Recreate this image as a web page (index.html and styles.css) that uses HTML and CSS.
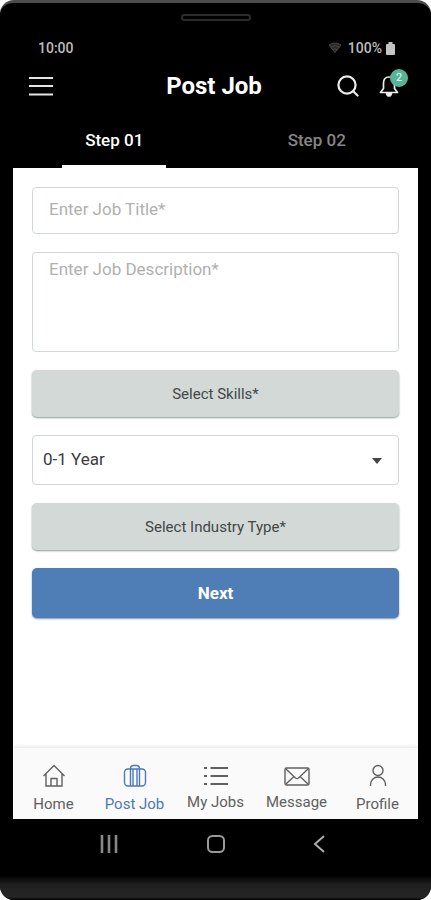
FILE: index.html
```html
<!DOCTYPE html>
<html lang="en">
<head>
<meta charset="utf-8">
<meta name="viewport" content="width=device-width, initial-scale=1">
<title>Post Job</title>
<link rel="stylesheet" href="styles.css">
</head>
<body>
<div class="phone">
  <div class="speaker"></div>
  <div class="status">
    <span>10:00</span>
    <span class="status-right">
      <svg class="wifi" width="14" height="12" viewBox="0 0 14 12" fill="none" stroke="#484848"><path d="M1 3Q7-1 13 3L7 10.500Z" fill="#292929"/><path d="M3 5q4-2.500 8 0M5 7.500q2-1.500 4 0"/></svg>
      <span>100%</span>
      <svg width="9" height="13" viewBox="0 0 9 13" fill="#c4c4c4"><path d="M2.500 0h4v2H8q1 0 1 1v9q0 1-1 1H1q-1 0-1-1V3q0-1 1-1h1.500z"/></svg>
    </span>
  </div>
  <header class="header">
    <button class="icon-button" aria-label="Menu">
      <svg width="24" height="20" viewBox="0 0 24 20" stroke="#e4e4e4" stroke-width="2.200"><path d="M0 2h24M0 10h24M0 18.500h24"/></svg>
    </button>
    <h1>Post Job</h1>
    <div class="actions">
      <button class="icon-button" aria-label="Search">
        <svg width="22" height="22" viewBox="0 0 22 22" fill="none" stroke="#ededed" stroke-width="2.200" stroke-linecap="round"><circle cx="10" cy="10" r="8.600"/><path d="M16.500 16.500l4 4"/></svg>
      </button>
      <button class="icon-button bell" aria-label="Notifications">
        <svg width="20" height="22" viewBox="0 0 20 22" fill="none" stroke="#ededed" stroke-width="1.700" stroke-linejoin="round"><path d="M10 2C6 2 4.500 5 4.500 8v5.500L1.500 17.500h17l-3-4V8C15.500 5 14 2 10 2z"/><path d="M7.500 18q.5 3 2.500 3t2.500-3z" fill="#ededed"/></svg>
        <span class="badge">2</span>
      </button>
    </div>
  </header>
  <div class="tabs" role="tablist">
    <button class="tab active" role="tab" aria-selected="true">Step 01</button>
    <button class="tab" role="tab" aria-selected="false">Step 02</button>
  </div>
  <main class="screen">
    <form class="form">
      <input class="field title" type="text" aria-label="Job title" placeholder="Enter Job Title*">
      <textarea class="field description" aria-label="Job description" placeholder="Enter Job Description*"></textarea>
      <button class="button picker" type="button">Select Skills*</button>
      <div class="select">
        <select class="field experience" aria-label="Experience"><option>0-1 Year</option></select>
        <svg class="caret" width="10" height="6" viewBox="0 0 10 6" fill="#444"><path d="M0 0h10L5 6z"/></svg>
      </div>
      <button class="button picker" type="button">Select Industry Type*</button>
      <button class="button next" type="button">Next</button>
    </form>
    <nav class="nav">
      <a href="#"><svg width="24" height="24" viewBox="0 0 24 24"><path d="M1.500 12L12 1.500 22.500 12M4 10v12h16V10M9 22v-7.500h6V22"/></svg>Home</a>
      <a class="current" href="#"><svg width="24" height="24" viewBox="0 0 24 24"><rect x="1.500" y="5" width="21" height="17" rx="3.500"/><path d="M7.500 22V4.500q0-3 3-3h3q3 0 3 3V22M10 5v17M14 5v17"/></svg>Post Job</a>
      <a class="raised" href="#"><svg width="24" height="24" viewBox="0 0 24 24"><path d="M6.500 4H24M6.500 12H24M6.500 20H24M0 4h3M0 12h3M0 20h3" stroke-width="2.200"/></svg>My Jobs</a>
      <a class="raised" href="#"><svg width="26" height="24" viewBox="0 0 26 24"><rect x="1" y="4" width="24" height="17" rx="1.500"/><path d="M2 5l9.500 9q1.500 1.200 3 0L24 5M2 20l8-7.500M24 20l-8-7.500"/></svg>Message</a>
      <a href="#"><svg width="24" height="24" viewBox="0 0 24 24"><circle cx="12" cy="6.500" r="5"/><path d="M4.500 22v-1.500a7.500 7.500 0 0 1 15 0V22"/></svg>Profile</a>
    </nav>
  </main>
  <div class="system">
    <button class="icon-button" aria-label="Recent apps"><svg width="18" height="18" viewBox="0 0 18 18" stroke="#878787" stroke-width="2.600"><path d="M2 0v18M9 0v18M16 0v18"/></svg></button>
    <button class="icon-button" aria-label="Home screen"><svg width="18" height="18" viewBox="0 0 18 18" fill="none" stroke="#999" stroke-width="2"><rect x="1" y="1" width="16" height="16" rx="4.500"/></svg></button>
    <button class="icon-button" aria-label="Back"><svg width="18" height="18" viewBox="0 0 18 18" fill="none" stroke="#aaa" stroke-width="2"><path d="M11 1L2 9l9 8"/></svg></button>
  </div>
  <div class="chin"></div>
</div>
</body>
</html>
```
FILE: styles.css
```css
* {
  box-sizing: border-box;
}

body {
  margin: 0;
  background: #fff;
  font-family: Roboto, "Liberation Sans", sans-serif;
}

button,
input,
textarea,
select {
  margin: 0;
  font: inherit;
}

svg {
  display: block;
}

.phone {
  display: flex;
  flex-direction: column;
  min-height: 100vh;
  overflow: hidden;
  border-top: 3px solid #4c4c4c;
  border-radius: 14px;
  background: #000;
}

.speaker {
  width: 70px;
  height: 7px;
  margin: 11px auto 0;
  border: 2px solid #2b2b2b;
  border-radius: 3px;
}

.status {
  display: flex;
  align-items: center;
  justify-content: space-between;
  height: 20px;
  margin-top: 17px;
  padding: 0 36px 0 38px;
  color: #bdbdbd;
  font-size: 14px;
  font-weight: 500;
}

.status-right {
  display: flex;
  align-items: center;
  gap: 4px;
}

.wifi {
  margin-right: 2px;
}

.header {
  display: grid;
  grid-template-columns: 1fr auto 1fr;
  align-items: center;
  height: 56px;
  padding: 0 32px 0 29px;
}

h1 {
  margin: 0;
  color: #fff;
  font-size: 24px;
  line-height: 32px;
  font-weight: 700;
}

.icon-button {
  justify-self: start;
  padding: 0;
  border: 0;
  background: none;
}

.actions {
  display: flex;
  align-items: center;
  justify-content: flex-end;
  gap: 20px;
}

.bell {
  position: relative;
}

.badge {
  position: absolute;
  top: -6px;
  right: -9px;
  width: 18px;
  height: 18px;
  border-radius: 50%;
  background: #59b398;
  color: #e5fff5;
  font-size: 11px;
  line-height: 18px;
  text-align: center;
}

.tabs {
  display: grid;
  grid-template-columns: 1fr 1fr;
  justify-items: center;
  height: 54px;
  padding: 0 13px;
}

.tab {
  width: 104px;
  padding: 0;
  border: 0;
  border-bottom: 3px solid transparent;
  background: none;
  color: #858585;
  font-size: 17px;
  font-weight: 500;
}

.tab.active {
  border-color: #fff;
  color: #fff;
}

.screen {
  display: flex;
  flex: 1;
  flex-direction: column;
  justify-content: space-between;
  overflow: hidden;
  margin: 0 13px;
  background: #fff;
}

.form {
  display: flex;
  flex-direction: column;
  gap: 18px;
  padding: 19px 19px 24px;
}

.field {
  display: block;
  width: 100%;
  border: 1px solid #d1d8d7;
  border-radius: 4px;
  outline: 0;
  background: #fff;
  color: #3c3c3c;
  font-size: 17px;
}

.field::placeholder {
  color: #b0b0b0;
  opacity: 1;
}

.title {
  height: 47px;
  padding: 0 16px 3px;
}

.description {
  height: 100px;
  padding: 5px 16px;
  line-height: 22px;
  resize: none;
}

.select {
  position: relative;
}

.experience {
  height: 50px;
  padding: 0 40px 2px 10px;
  appearance: none;
}

.caret {
  position: absolute;
  top: 23px;
  right: 17px;
  pointer-events: none;
}

.button {
  height: 47px;
  padding: 0 16px;
  border: 0;
  border-radius: 5px;
}

.picker {
  background: #d2d9d7;
  box-shadow: 0 1px 2px #8c9996;
  color: #424747;
  font-size: 15px;
}

.next {
  height: 50px;
  background: #4f7db5;
  box-shadow: 0 1px 2px #7896b8;
  color: #fff;
  font-size: 17px;
  font-weight: 700;
}

.nav {
  display: grid;
  grid-template-columns: repeat(5, 1fr);
  height: 71px;
  background: #fafafa;
  box-shadow: 0 -1px 4px #e2e2e2;
}

.nav a {
  display: flex;
  flex-direction: column;
  align-items: center;
  gap: 7px;
  padding-top: 16px;
  color: #606060;
  font-size: 15px;
  line-height: 18px;
  text-decoration: none;
}

.nav a.raised {
  gap: 5px;
}

.nav a.current {
  color: #4d79b5;
}

.nav svg {
  fill: none;
  stroke: currentColor;
  stroke-width: 1.4;
}

.system {
  display: flex;
  align-items: center;
  justify-content: space-between;
  height: 50px;
  padding: 0 100px;
}

.chin {
  height: 31px;
  background: linear-gradient(#000 6px, #202020 16px, #262626 28px, #000);
}
```
